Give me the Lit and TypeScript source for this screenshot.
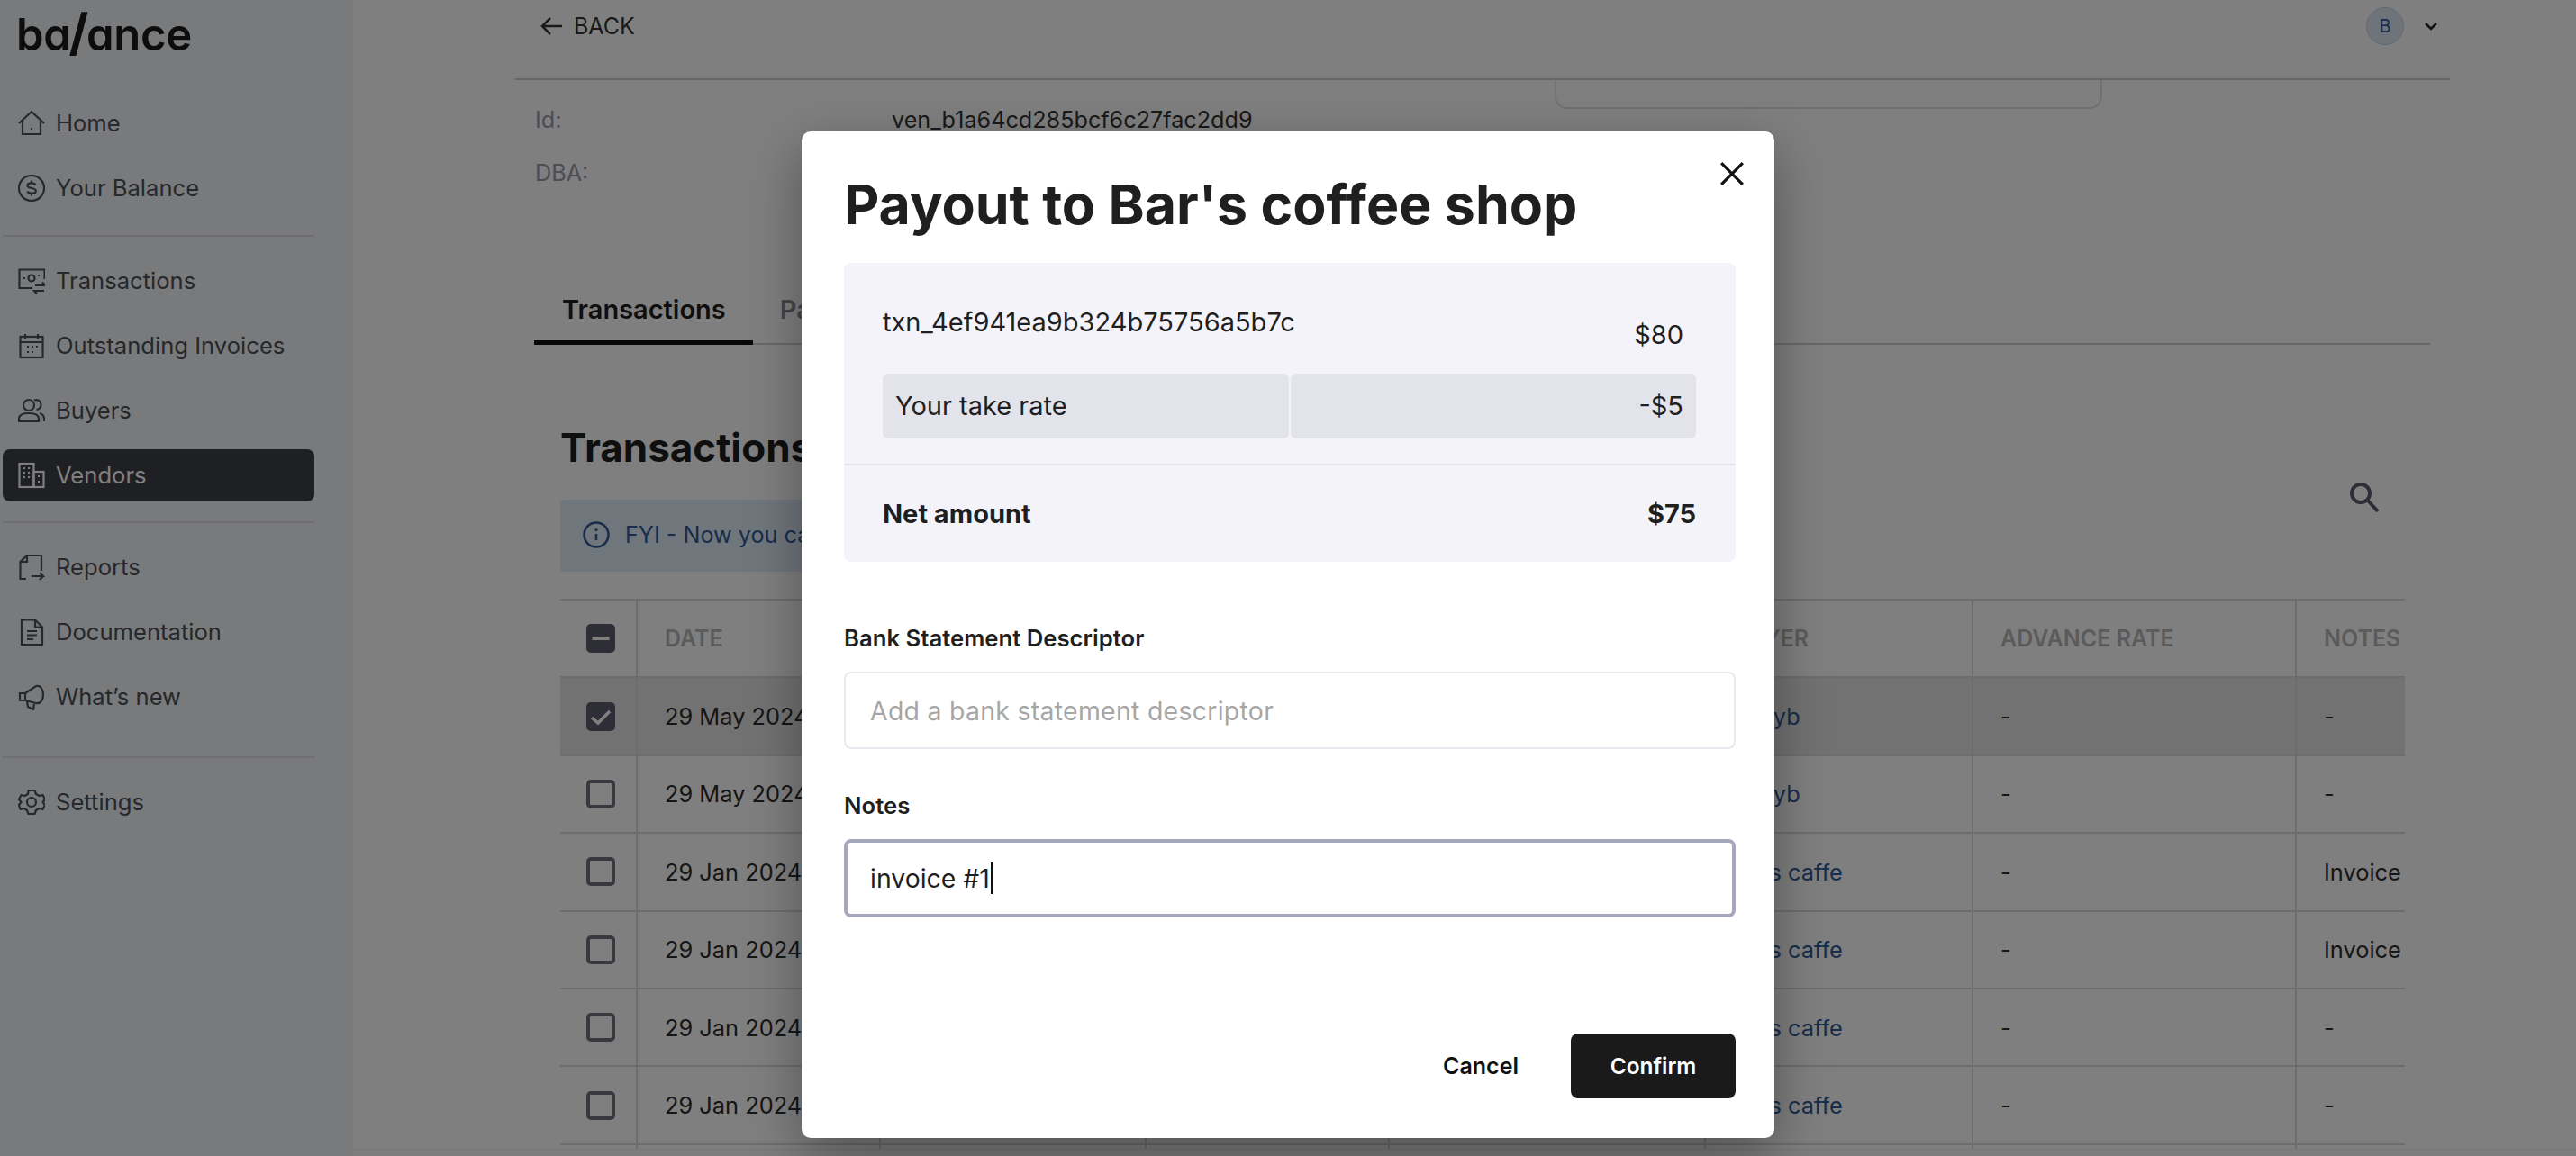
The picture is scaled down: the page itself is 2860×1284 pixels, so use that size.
import { LitElement, html, css, svg } from "lit";
import { customElement } from "lit/decorators.js";

const ic = (body: unknown) => html`<svg class="ic" viewBox="0 0 30 30" fill="none" stroke="currentColor" stroke-width="2.2">${body}</svg>`;

const icons: Record<string, unknown> = {
  home: ic(svg`<path d="M1 15 15 2l14 13"/><path d="M5 12v15h20V12"/><circle cx="15" cy="21" r="1.200" fill="currentColor" stroke="none"/>`),
  balance: ic(svg`<circle cx="15" cy="15" r="14"/><path d="M19.500 11.500c-.7-1.500-2.500-2.200-4.500-2.200-2.500 0-4.500 1.100-4.500 2.900 0 3.900 9.300 1.700 9.300 5.700 0 1.800-2 2.800-4.600 2.800-2.200 0-4.100-.8-4.900-2.300M15 6.500v2.800M15 21v2.800"/>`),
  tx: ic(svg`<path d="M16 23H1.500V2.500h28V13"/><circle cx="15" cy="12" r="3.500"/><path d="M6 12h2M22 9h2"/><path d="M19 20h11l-3-3.500M29 26H18l3 3.500"/>`),
  invoices: ic(svg`<rect x="2.500" y="5" width="25" height="23"/><path d="M2.500 11h25M8 2v5M22 2v5"/><path d="M10 16h2M15 16h2M20 16h2M10 22h2M15 22h2"/>`),
  buyers: ic(svg`<circle cx="12" cy="9" r="6"/><path d="M1 27v-3c0-4 4-6 11-6s11 2 11 6v3z"/><path d="M18 3.500c4-1.500 7.500 1 7.500 5 0 3-2 5-5 5.500M24 18c3 1 5 3 5 6v3"/>`),
  vendors: ic(svg`<rect x="1.500" y="2" width="16" height="26"/><rect x="17.500" y="11" width="11" height="17"/><path d="M6 7h2M11 7h2M6 12h2M11 12h2M6 17h2M11 17h2M22 16h2M22 22h2"/>`),
  reports: ic(svg`<path d="M9 28H2.500V9L10 2h16v17"/><path d="M10 2v7H2.500"/><path d="M15 25h13l-4-4M28 25l-4 4"/>`),
  docs: ic(svg`<path d="M4 29V1.500h15l8 8V29z"/><path d="M19 1.500v8h8"/><path d="M10 14h11M10 18.500h11M10 23h7"/>`),
  news: ic(svg`<path d="M2 11h6v8H2zM8 11l12-8c6-1 8 5 8 10s-3 10-8 9L8 19M10 20l1 6 6 3 1-6"/>`),
  settings: ic(svg`<circle cx="15" cy="15" r="5"/><path d="M11.500 2h7l1.500 4 3.500 2 4-1 2.500 5-2.500 3 2.500 3-2.500 5-4-1-3.500 2-1.500 4h-7l-1.500-4-3.500-2-4 1L1 18l2.500-3L1 12l2.500-5 4 1L11 6z" stroke-linejoin="round"/>`),
};

const rows = [
  { date: "29 May 2024", buyer: "Mmyb", notes: "-", sel: true },
  { date: "29 May 2024", buyer: "Mmyb", notes: "-", sel: false },
  { date: "29 Jan 2024", buyer: "Bars caffe", notes: "Invoice", sel: false },
  { date: "29 Jan 2024", buyer: "Bars caffe", notes: "Invoice", sel: false },
  { date: "29 Jan 2024", buyer: "Bars caffe", notes: "-", sel: false },
  { date: "29 Jan 2024", buyer: "Bars caffe", notes: "-", sel: false },
];

@customElement("app-root")
export class AppRoot extends LitElement {
  static styles = css`
    :host { display: block; position: relative; width: 2860px; height: 1284px; overflow: hidden; background: #fff;
      font-family: Inter, "Liberation Sans", sans-serif; color: #343434; }
    * { box-sizing: border-box; }
    .page { display: grid; grid-template-columns: 392px 1fr; height: 1284px; }

    .side { background: #f2f4f8; padding: 0 43px 0 3px; display: flex; flex-direction: column; }
    .logo { height: 108px; padding: 3px 0 0 15px; font-size: 49px; line-height: 72px; font-weight: 600; color: #1a1a1a;
      font-feature-settings: "cv11"; letter-spacing: -0.3px; }
    .slash { font-size: 56px; font-weight: 700; line-height: 0; margin: 0 -2px; }
    .nav { display: flex; flex-direction: column; gap: 14px; }
    .item { height: 58px; display: flex; align-items: center; gap: 12px; padding-left: 17px; border-radius: 8px;
      font-size: 25.6px; color: #4c5056; }
    .item span { margin-top: -2px; }
    .item.on { background: #3e4048; color: #fff; }
    .ic { width: 30px; height: 30px; flex: none; }
    .rule { height: 2px; background: #dcdde0; }
    .r1 { margin-top: 23px; margin-bottom: 20px; }
    .r2 { margin-top: 22px; margin-bottom: 20px; }
    .r3 { margin-top: 37px; margin-bottom: 20px; }

    .main { height: 1284px; display: flex; flex-direction: column; overflow: hidden; min-width: 0; }
    .head { flex: none; margin-left: 180px; width: 2148px; height: 89px; border-bottom: 2px solid #d0d0d4; display: flex; align-items: center;
      padding: 0 13px 30px 28px; }
    .back { display: flex; align-items: center; gap: 12px; font-size: 25px; color: #343434; }
    .back svg { width: 25px; height: 22px; }
    .spacer { flex: 1; }
    .avatar { width: 42px; height: 42px; border-radius: 50%; background: #dce8f5; border: 1px solid #c3d3e6; color: #2f5a96;
      font-size: 20px; display: flex; align-items: center; justify-content: center; }
    .chev { width: 16px; height: 10px; margin-left: 22px; color: #222; }

    .details { flex: none; margin-left: 180px; display: flex; height: 221px; padding-left: 22px; }
    .facts { width: 1132px; padding-top: 14px; }
    .fact { height: 59px; display: grid; grid-template-columns: 396px 1fr; align-items: center; font-size: 25.2px; }
    .k { color: #9a9aa6; }
    .v { color: #343434; }
    .stub { width: 608px; height: 32px; border: 2px solid #e2e2e6; border-top: 0; border-radius: 0 0 14px 14px; }

    .tabs { flex: none; margin-left: 201px; width: 2105px; height: 73px; display: flex; border-bottom: 2px solid #d0d0d4; }
    .tab { height: 73px; padding: 0 30px; display: flex; align-items: center; padding-bottom: 7px; font-size: 29px; font-weight: 600; color: #8a8a94; }
    .tab.on { color: #1f1f1f; border-bottom: 5px solid #111; padding: 0 30px 2px 31px; }

    .sec { flex: 1; min-height: 0; margin: 82px 0 0 230px; width: 2048px; display: flex; flex-direction: column; }
    .tools { flex: none; display: flex; justify-content: space-between; align-items: center; padding-right: 27px; }
    .h2 { margin: 0; font-size: 44px; line-height: 64px; font-weight: 700; color: #1f1f1f; }
    .fyi { margin-top: 26px; width: 1300px; height: 80px; background: #dfecf8; border-radius: 4px; display: flex; align-items: center;
      padding: 0 0 2px 25px; gap: 17px; font-size: 25.2px; color: #2f5a96; }
    .fyi svg { width: 30px; height: 30px; }
    .search { width: 36px; height: 36px; color: #5a5c6c; margin-top: 3px; }

    .table { flex: 1; min-height: 0; margin-top: 30px; overflow: hidden; display: grid;
      grid-template-columns: 86px 270px 295px 270px 351px 297px 359px 300px; grid-auto-rows: 86.4px;
      border-top: 2px solid #dadada; }
    .cell { display: flex; align-items: center; white-space: nowrap; border-right: 2px solid #dadada; border-bottom: 2px solid #dadada;
      padding-left: 30px; font-size: 25.4px; color: #2c2c2c; min-width: 0; }
    .cell.h { color: #b6b6b6; font-weight: 600; font-size: 25px; }
    .cell.c { padding: 0 0 0 6px; justify-content: center; }
    .cell.sel { background: #e4e4e4; }
    .cell.a { color: #2f5a96; }
    .box { width: 32px; height: 32px; border-radius: 5px; border: 4px solid #70727f; display: flex; align-items: center; justify-content: center; }
    .box.f { background: #5a5c6c; border: 0; }
    .box svg { width: 24px; height: 24px; }
    .strip { flex: none; height: 8px; background: #fbfbfb; border-top: 1px solid #eeeeee; }

    .veil { position: absolute; inset: 0; background: rgba(0,0,0,.5); display: flex; justify-content: center; padding-top: 146px; }
    .modal { position: relative; width: 1080px; height: 1118px; background: #fff; border-radius: 10px; padding: 45px 43px 44px 47px;
      display: flex; flex-direction: column; color: #1f1f1f; box-shadow: 0 20px 60px rgba(0,0,0,.35); }
    .x { position: absolute; top: 33px; right: 33px; width: 28px; height: 28px; color: #111; }
    .title { margin: 0 0 29px; font-size: 60.8px; line-height: 72px; font-weight: 700; color: #1f1f1f; }
    .card { background: #f3f3f9; border-radius: 8px; height: 332px; display: flex; flex-direction: column; }
    .line1 { height: 123px; display: flex; justify-content: space-between; padding: 0 58px 0 43px; font-size: 29px; line-height: 36px; }
    .line1 .t { margin-top: 48px; }
    .line1 .m { margin-top: 62px; }
    .take { margin: 0 44px 0 43px; height: 72px; display: grid; grid-template-columns: 1fr 1fr; gap: 2px; font-size: 29px; }
    .take div { background: #e3e3ec; display: flex; align-items: center; padding: 0 14px 2px; border-radius: 6px; }
    .take div + div { justify-content: flex-end; }
    .net { margin-top: 28px; border-top: 2px solid #e3e3ea; flex: 1; display: flex; align-items: center; justify-content: space-between;
      padding: 0 44px 0 43px; font-size: 29px; font-weight: 700; }
    .lab { margin: 67px 0 19px; font-size: 25.7px; line-height: 36px; font-weight: 600; color: #1f1f1f; }
    .lab.n { margin-top: 45px; }
    .inp { height: 86px; border: 2px solid #e8e8ee; border-radius: 8px; padding-left: 27px; display: flex; align-items: center;
      font-size: 28.4px; color: #a6a6a6; letter-spacing: .3px; }
    .inp.f { height: 87px; border: 4px solid #a6a7ba; padding-left: 25px; color: #1f1f1f; letter-spacing: 0; }
    .caret { width: 2px; height: 35px; background: #111; margin-left: 1px; }
    .foot { margin-top: auto; display: flex; justify-content: flex-end; align-items: center; }
    .cancel { font-size: 25px; font-weight: 600; color: #111; margin-right: 58px; }
    .ok { width: 183px; height: 72px; background: #1a1a1a; color: #fff; border-radius: 8px; font-size: 24.4px; font-weight: 600;
      display: flex; align-items: center; justify-content: center; }
  `;

  private item(key: string, label: string, on = false) {
    return html`<div class="item ${on ? "on" : ""}">${icons[key]}<span>${label}</span></div>`;
  }

  render() {
    const heads = ["DATE", "", "", "", "BUYER", "ADVANCE RATE", "NOTES"];
    return html`
      <div class="page">
        <aside class="side">
          <div class="logo">ba<span class="slash">/</span>ance</div>
          <div class="nav">${this.item("home", "Home")}${this.item("balance", "Your Balance")}</div>
          <div class="rule r1"></div>
          <div class="nav">
            ${this.item("tx", "Transactions")}${this.item("invoices", "Outstanding Invoices")}
            ${this.item("buyers", "Buyers")}${this.item("vendors", "Vendors", true)}
          </div>
          <div class="rule r2"></div>
          <div class="nav">${this.item("reports", "Reports")}${this.item("docs", "Documentation")}${this.item("news", "What’s new")}</div>
          <div class="rule r3"></div>
          <div class="nav">${this.item("settings", "Settings")}</div>
        </aside>
        <main class="main">
          <header class="head">
            <div class="back">
              <svg viewBox="0 0 25 22" fill="none" stroke="currentColor" stroke-width="2.500"><path d="M24 11H2M11 2l-9 9 9 9"/></svg>
              <span>BACK</span>
            </div>
            <div class="spacer"></div>
            <div class="avatar">B</div>
            <svg class="chev" viewBox="0 0 16 10" fill="none" stroke="currentColor" stroke-width="2.500"><path d="M2 2l6 6 6-6"/></svg>
          </header>
          <section class="details">
            <div class="facts">
              <div class="fact"><span class="k">Id:</span><span class="v">ven_b1a64cd285bcf6c27fac2dd9</span></div>
              <div class="fact"><span class="k">DBA:</span><span class="v"></span></div>
            </div>
            <div class="stub"></div>
          </section>
          <nav class="tabs">
            <div class="tab on">Transactions</div>
            <div class="tab">Payouts</div>
          </nav>
          <section class="sec">
            <div class="tools">
              <div>
                <h2 class="h2">Transactions</h2>
                <div class="fyi">
                  <svg viewBox="0 0 30 30" fill="none" stroke="currentColor" stroke-width="2.500"><circle cx="15" cy="15" r="13.500"/><path d="M15 14v7" /><circle cx="15" cy="9.500" r="1.500" fill="currentColor" stroke="none"/></svg>
                  <span>FYI - Now you can</span>
                </div>
              </div>
              <svg class="search" viewBox="0 0 36 36" fill="none" stroke="currentColor" stroke-width="4"><circle cx="14" cy="14" r="10"/><path d="M21 21l12 13"/></svg>
            </div>
            <div class="table">
              <div class="cell h c"><div class="box f"><svg viewBox="0 0 24 24" fill="none" stroke="#fff" stroke-width="4"><path d="M2.500 12h19"/></svg></div></div>
              ${heads.map((h) => html`<div class="cell h">${h}</div>`)}
              ${rows.map((r) => {
                const s = r.sel ? "sel" : "";
                return html`
                  <div class="cell c ${s}">
                    ${r.sel
                      ? html`<div class="box f"><svg viewBox="0 0 24 24" fill="none" stroke="#fff" stroke-width="3.500"><path d="M2 13l7 6L22 6"/></svg></div>`
                      : html`<div class="box"></div>`}
                  </div>
                  <div class="cell ${s}">${r.date}</div>
                  <div class="cell ${s}"></div><div class="cell ${s}"></div><div class="cell ${s}"></div>
                  <div class="cell a ${s}">${r.buyer}</div>
                  <div class="cell ${s}">-</div>
                  <div class="cell ${s}">${r.notes}</div>`;
              })}
              ${[0, 1, 2, 3, 4, 5, 6, 7].map(() => html`<div class="cell"></div>`)}
            </div>
          </section>
          <div class="strip"></div>
        </main>
      </div>
      <div class="veil">
        <div class="modal">
          <svg class="x" viewBox="0 0 26 26" fill="none" stroke="currentColor" stroke-width="3"><path d="M2 2l22 22M24 2 2 24"/></svg>
          <h1 class="title">Payout to Bar's coffee shop</h1>
          <div class="card">
            <div class="line1"><span class="t">txn_4ef941ea9b324b75756a5b7c</span><span class="m">$80</span></div>
            <div class="take"><div>Your take rate</div><div>-$5</div></div>
            <div class="net"><span>Net amount</span><span>$75</span></div>
          </div>
          <div class="lab">Bank Statement Descriptor</div>
          <div class="inp">Add a bank statement descriptor</div>
          <div class="lab n">Notes</div>
          <div class="inp f">invoice #1<span class="caret"></span></div>
          <div class="foot"><span class="cancel">Cancel</span><div class="ok">Confirm</div></div>
        </div>
      </div>
    `;
  }
}
